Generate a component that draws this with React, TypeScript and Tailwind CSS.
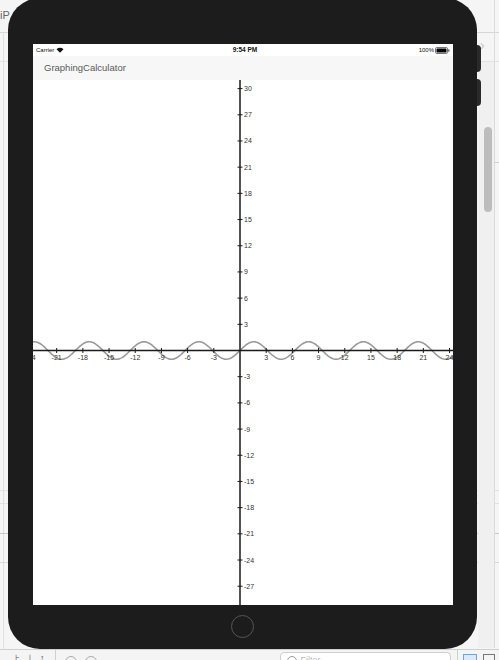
import React from "react";

const S = 8.73;
const OX = 207;
const OY = 270.5;
const W = 420;
const H = 525;

function sinePath() {
  let d = "";
  for (let px = 0; px <= W; px += 1) {
    const x = (px - OX) / S;
    const y = OY - Math.sin(x) * S;
    d += (px === 0 ? "M" : "L") + px.toFixed(1) + " " + y.toFixed(2) + " ";
  }
  return d;
}

function Graph() {
  const xs: number[] = [];
  for (let v = -24; v <= 24; v += 3) if (v !== 0) xs.push(v);
  const ys: number[] = [];
  for (let v = -30; v <= 30; v += 3) if (v !== 0) ys.push(v);
  return (
    <svg width={W} height={H} className="block overflow-hidden" style={{ fontFamily: "'Liberation Sans', Arial, sans-serif" }}>
      <path d={sinePath()} fill="none" stroke="#9a9a9a" strokeWidth={1.6} />
      <line x1={0} y1={OY} x2={W} y2={OY} stroke="#1a1a1a" strokeWidth={1.5} />
      <line x1={OX} y1={0} x2={OX} y2={H} stroke="#1a1a1a" strokeWidth={1.5} />
      {xs.map((v) => {
        const px = OX + v * S;
        return (
          <g key={"x" + v}>
            <line x1={px} y1={OY - 2.5} x2={px} y2={OY + 2.5} stroke="#1a1a1a" strokeWidth={1} />
            <text x={px} y={OY + 9.5} fontSize={7} fill="#333" textAnchor="middle">
              {v}
            </text>
          </g>
        );
      })}
      {ys.map((v) => {
        const py = OY - v * S;
        return (
          <g key={"y" + v}>
            <line x1={OX - 2.5} y1={py} x2={OX + 2.5} y2={py} stroke="#1a1a1a" strokeWidth={1} />
            <text x={OX + 4} y={py + 2.5} fontSize={7} fill="#333">
              {v}
            </text>
          </g>
        );
      })}
    </svg>
  );
}

function Wifi() {
  return (
    <svg width="8" height="6" viewBox="0 0 16 12">
      <path d="M8 11.5 L1 4.5 A10 10 0 0 1 15 4.5 Z" fill="#111" />
    </svg>
  );
}

function Battery() {
  return (
    <svg width="15" height="7" viewBox="0 0 15 7">
      <rect x="0.5" y="0.5" width="12" height="6" rx="1.2" fill="none" stroke="#555" strokeWidth="0.8" />
      <rect x="1.5" y="1.5" width="10" height="4" rx="0.6" fill="#000" />
      <rect x="13.2" y="2.2" width="1.3" height="2.6" rx="0.5" fill="#555" />
    </svg>
  );
}

export default function App() {
  return (
    <div
      className="relative w-[499px] h-[660px] overflow-hidden bg-[#f5f5f5]"
      style={{ fontFamily: "'Liberation Sans', Arial, sans-serif" }}
    >
      {/* Xcode background details */}
      <div className="absolute left-0 top-[10px] text-[11px] text-[#666] leading-none">iP</div>
      <div className="absolute left-0 top-[32px] w-[499px] h-px bg-[#d6d6d6]" />
      <div className="absolute left-0 top-[61px] w-[499px] h-px bg-[#e2e2e2]" />
      <div className="absolute left-[3px] top-[32px] w-px h-[620px] bg-[#e0e0e0]" />
      <div className="absolute left-0 top-[490px] w-[499px] h-px bg-[#e2e2e2]" />
      <div className="absolute left-0 top-[503px] w-[499px] h-px bg-[#e2e2e2]" />
      <div className="absolute left-0 top-[533px] w-[499px] h-px bg-[#c8c8c8]" />
      <div className="absolute left-0 top-[562px] w-[499px] h-px bg-[#d8d8d8]" />
      <div className="absolute left-[494px] top-0 w-px h-[648px] bg-[#dcdcdc]" />
      <div className="absolute left-[494px] top-[162px] w-[5px] h-px bg-[#d0d0d0]" />
      <div className="absolute left-[478px] top-[62px] w-[16px] h-[586px] bg-[#f0f0f0]" />
      <div className="absolute left-[484px] top-[127px] w-[8px] h-[85px] rounded-full bg-[#bdbdbd]" />
      <div className="absolute left-[480px] top-[38px] text-[14px] text-[#c4c4c4] leading-none">›</div>

      {/* side buttons */}
      <div className="absolute left-[476px] top-[45px] w-[5px] h-[27px] rounded-r-sm bg-[#2a2a2a]" />
      <div className="absolute left-[476px] top-[79px] w-[5px] h-[27px] rounded-r-sm bg-[#2a2a2a]" />

      {/* iPad frame */}
      <div className="absolute left-[8px] top-[-2px] w-[469px] h-[651px] rounded-[32px] bg-[#1c1c1c] flex flex-col items-start pl-[25px] pt-[46px]">
        <div className="w-[420px] h-[561px] bg-white flex flex-col overflow-hidden">
          {/* status bar */}
          <div className="h-[12px] flex items-center justify-between px-[3px] bg-white text-[6px] text-[#111] leading-none">
            <div className="flex items-center gap-[2px] w-[60px]">
              <span>Carrier</span>
              <Wifi />
            </div>
            <div className="font-bold text-[6.5px] ml-[4px]">9:54 PM</div>
            <div className="flex items-center justify-end gap-[1px] w-[60px]">
              <span>100%</span>
              <Battery />
            </div>
          </div>
          {/* nav bar */}
          <div className="h-[24px] bg-[#f7f7f8] flex items-center pl-[11px] text-[9.5px] text-[#5a5a5a]">
            GraphingCalculator
          </div>
          <Graph />
        </div>
        <div className="w-[420px] flex justify-center pt-[10px]">
          <div className="w-[23px] h-[23px] rounded-full border border-[#555] ml-[-2px]" />
        </div>
      </div>

      {/* bottom toolbar */}
      <div className="absolute left-0 top-[649px] w-[499px] h-[11px] bg-[#f4f4f4] border-t border-[#cfcfcf] flex items-start text-[#555]">
        <div className="flex items-center gap-[6px] pl-[15px] pt-[4px] text-[9px] leading-none">
          <span>⊦</span>
          <span>⊥</span>
          <span>↕</span>
        </div>
        <div className="w-px h-[11px] bg-[#d0d0d0] ml-[10px]" />
        <div className="w-[12px] h-[12px] rounded-full border border-[#aaa] ml-[9px] mt-[6px]" />
        <div className="w-[12px] h-[12px] rounded-full border border-[#aaa] ml-[8px] mt-[6px]" />
        <div className="ml-[183px] mt-[2px] w-[171px] h-[14px] rounded-[4px] border border-[#cfcfcf] bg-white flex items-start pl-[6px] pt-[3px] gap-[4px]">
          <div className="w-[10px] h-[10px] rounded-full border border-[#999]" />
          <span className="text-[9px] text-[#bbb] leading-none">Filter</span>
        </div>
        <div className="w-px h-[11px] bg-[#d0d0d0] ml-[6px]" />
        <div className="w-[14px] h-[12px] border border-[#6aa5e8] bg-[#dbe9fb] ml-[5px] mt-[4px]" />
        <div className="w-[12px] h-[12px] border border-[#777] ml-[6px] mt-[4px]" />
      </div>
    </div>
  );
}
